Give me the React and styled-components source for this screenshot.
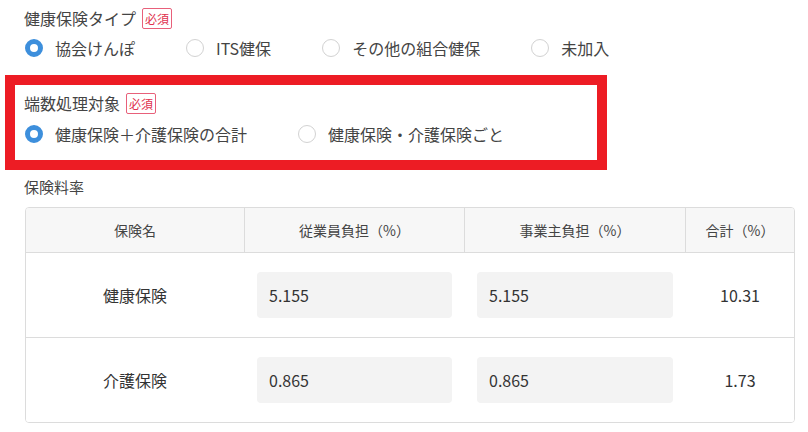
import styled, { createGlobalStyle } from "styled-components";

const GlobalStyle = createGlobalStyle`
    body {
        margin: 0;
        background: #fff;
        font-family: "Noto Sans CJK JP", "Noto Sans", sans-serif;
        color: #333;
    }
`;

const Page = styled.div`
    display: flex;
    flex-direction: column;
    padding-top: 8px;
`;

const Field = styled.section`
    display: flex;
    flex-direction: column;
    gap: ${(p) => p.$gap || 8}px;
    padding-left: 24px;
`;

const Highlight = styled.section`
    display: flex;
    flex-direction: column;
    gap: 9px;
    width: 602px;
    box-sizing: border-box;
    margin: 15px 0 0 5px;
    padding: 8px 0 14px 9px;
    border: 10px solid #ed1c24;
`;

const Title = styled.div`
    display: flex;
    align-items: center;
    height: 20px;
    font-size: 16px;
    line-height: 20px;
    color: #444;
`;

const Badge = styled.span`
    margin-left: 6px;
    padding: 0 2px;
    height: 21px;
    box-sizing: border-box;
    border: 1px solid #e8607a;
    border-radius: 2px;
    color: #e0304e;
    font-size: 12px;
    line-height: 19px;
`;

const RadioRow = styled.div`
    display: flex;
    align-items: center;
    gap: 50px;
    height: 24px;
`;

const Option = styled.label`
    display: flex;
    align-items: center;
    gap: 12px;
    font-size: 16px;
    color: #444;
`;

const Circle = styled.span`
    display: block;
    width: 18px;
    height: 18px;
    margin-left: 1px;
    box-sizing: border-box;
    border-radius: 50%;
    background: #fff;
    border: ${(p) => (p.$checked ? "5px solid #3d8fdc" : "1px solid #d2d2d2")};
`;

const SectionTitle = styled.div`
    margin: 7px 0 0 24px;
    height: 20px;
    font-size: 15px;
    line-height: 20px;
    color: #444;
`;

const Table = styled.div`
    margin: 10px 0 0 25px;
    width: 768px;
    border: 1px solid #dcdcdc;
    border-radius: 4px;
    overflow: hidden;
`;

const Row = styled.div`
    display: grid;
    grid-template-columns: 218px 220px 221px 1fr;
    height: ${(p) => (p.$head ? 44 : 84)}px;
    background: ${(p) => (p.$head ? "#f7f7f7" : "#fff")};
    border-bottom: ${(p) => (p.$last ? "none" : "1px solid #dcdcdc")};
`;

const HeadCell = styled.div`
    display: flex;
    align-items: center;
    justify-content: center;
    font-size: 14px;
    color: #444;
    & + & {
        border-left: 1px solid #dcdcdc;
    }
`;

const Cell = styled.div`
    display: flex;
    align-items: center;
    justify-content: ${(p) => (p.$input ? "stretch" : "center")};
    padding: ${(p) => (p.$input ? "0 12px 0 12px" : "0")};
    font-size: 16px;
    color: #333;
    & + & {
        border-left: 1px solid transparent;
    }
`;

const Input = styled.input`
    width: 100%;
    height: 46px;
    box-sizing: border-box;
    border: none;
    border-radius: 4px;
    background: #f3f3f3;
    padding: 0 12px;
    font-family: inherit;
    font-size: 16px;
    color: #333;
    outline: none;
`;

const types = ["協会けんぽ", "ITS健保", "その他の組合健保", "未加入"];
const targets = ["健康保険＋介護保険の合計", "健康保険・介護保険ごと"];

const rates = [
    { name: "健康保険", employee: "5.155", employer: "5.155", total: "10.31" },
    { name: "介護保険", employee: "0.865", employer: "0.865", total: "1.73" },
];

function Radios({ items }) {
    return (
        <RadioRow>
            {items.map((item, i) => (
                <Option key={item}>
                    <Circle $checked={i === 0} />
                    {item}
                </Option>
            ))}
        </RadioRow>
    );
}

export default function App() {
    return (
        <>
            <GlobalStyle />
            <Page>
                <Field>
                    <Title>
                        健康保険タイプ<Badge>必須</Badge>
                    </Title>
                    <Radios items={types} />
                </Field>
                <Highlight>
                    <Title>
                        端数処理対象<Badge>必須</Badge>
                    </Title>
                    <Radios items={targets} />
                </Highlight>
                <SectionTitle>保険料率</SectionTitle>
                <Table>
                    <Row $head>
                        <HeadCell>保険名</HeadCell>
                        <HeadCell>従業員負担（%）</HeadCell>
                        <HeadCell>事業主負担（%）</HeadCell>
                        <HeadCell>合計（%）</HeadCell>
                    </Row>
                    {rates.map((r, i) => (
                        <Row key={r.name} $last={i === rates.length - 1}>
                            <Cell>{r.name}</Cell>
                            <Cell $input>
                                <Input readOnly value={r.employee} />
                            </Cell>
                            <Cell $input>
                                <Input readOnly value={r.employer} />
                            </Cell>
                            <Cell>{r.total}</Cell>
                        </Row>
                    ))}
                </Table>
            </Page>
        </>
    );
}
